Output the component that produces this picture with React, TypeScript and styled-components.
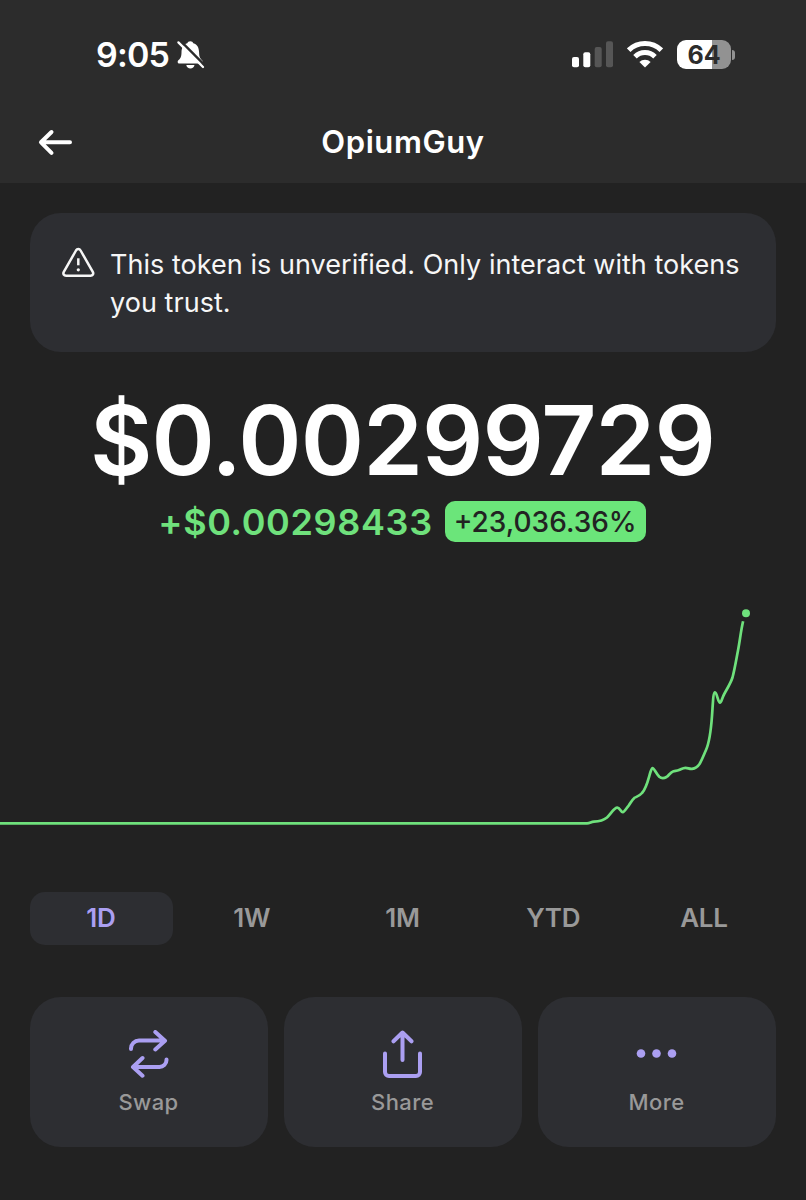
import React from "react";
import styled, { createGlobalStyle } from "styled-components";

const GlobalStyle = createGlobalStyle`
  * { box-sizing: border-box; }
  body {
    margin: 0;
    background: #222222;
    font-family: Inter, "Liberation Sans", sans-serif;
    color: #fff;
  }
`;

const Screen = styled.div`
  width: 806px;
  height: 1200px;
  overflow: hidden;
  display: flex;
  flex-direction: column;
  background: #222222;
`;

const Header = styled.header`
  height: 183px;
  background: #2c2c2c;
  display: flex;
  flex-direction: column;
`;

const StatusBar = styled.div`
  height: 101px;
  padding: 8px 71px 0 96px;
  display: flex;
  align-items: center;
  justify-content: space-between;
`;

const StatusGroup = styled.div<{ $gap: number }>`
  display: flex;
  align-items: center;
  gap: ${(p) => p.$gap}px;
`;

const Time = styled.span`
  font-size: 34px;
  line-height: 40px;
  padding-top: 1px;
  font-weight: 600;
  letter-spacing: -0.8px;
`;

const NavBar = styled.div`
  height: 82px;
  padding: 0 38px;
  display: grid;
  grid-template-columns: 36px 1fr 36px;
  align-items: center;
`;

const Title = styled.h1`
  margin: 0;
  text-align: center;
  font-size: 31px;
  line-height: 40px;
  font-weight: 560;
  letter-spacing: 0.6px;
`;

const Notice = styled.section`
  margin: 30px 30px 0;
  height: 139px;
  padding: 32px 20px 0 32px;
  border-radius: 31px;
  background: #2d2e32;
  display: flex;
  gap: 15px;
`;

const NoticeText = styled.p`
  margin: 0;
  padding-top: 1px;
  white-space: nowrap;
  font-size: 27px;
  line-height: 38px;
  letter-spacing: 0.04px;
  color: #f6f6f6;
`;

const Price = styled.div`
  margin-top: 30px;
  height: 116px;
  padding-right: 1px;
  text-align: center;
  font-size: 96px;
  line-height: 116px;
  font-weight: 570;
  letter-spacing: -0.9px;
  white-space: nowrap;
`;

const ChangeRow = styled.div`
  margin-top: 3px;
  height: 41px;
  padding-right: 2px;
  display: flex;
  justify-content: center;
  align-items: center;
  gap: 12px;
`;

const Change = styled.span`
  color: #6fe17c;
  font-size: 36px;
  line-height: 41px;
  padding-top: 1px;
  font-weight: 570;
  letter-spacing: 0.65px;
`;

const Badge = styled.span`
  width: 201px;
  height: 41px;
  border-radius: 10px;
  background: #6be57a;
  color: #222222;
  text-align: center;
  font-size: 28px;
  line-height: 42px;
  font-weight: 520;
  white-space: nowrap;
`;

const Chart = styled.svg`
  display: block;
  flex: none;
  margin-top: 48px;
`;

const Tabs = styled.nav`
  margin: 52px 30px 0;
  height: 53px;
  display: flex;
  justify-content: space-between;
`;

const Tab = styled.button<{ $active?: boolean }>`
  width: 143px;
  height: 53px;
  padding: 0 1px 1px 0;
  border: 0;
  border-radius: 15px;
  background: ${(p) => (p.$active ? "#2d2e32" : "transparent")};
  color: ${(p) => (p.$active ? "#ab9ff2" : "#999999")};
  font: 560 26px / 52px Inter, sans-serif;
  letter-spacing: -0.2px;
`;

const Actions = styled.div`
  margin: 52px 30px 0;
  display: grid;
  grid-template-columns: repeat(3, 238px);
  justify-content: space-between;
`;

const Action = styled.button`
  height: 150px;
  padding: 33px 1px 0 0;
  border: 0;
  border-radius: 31px;
  background: #2d2e32;
  display: flex;
  flex-direction: column;
  align-items: center;
  color: #999999;
  font: 550 22px / 28px Inter, sans-serif;
  letter-spacing: 0.4px;
`;

const ActionIcon = styled.svg`
  display: block;
  margin-bottom: 10px;
  fill: none;
  stroke: #ab9ff2;
  stroke-width: 4;
  stroke-linecap: round;
  stroke-linejoin: round;
`;

const MutedBell = () => (
  <svg width="29" height="30" viewBox="0 0 29 30">
    <path
      fill="#fff"
      d="M14.3 1.2c1.6 0 2.6.8 3 2 4.2 1.2 5.6 4.5 5.8 9.200.1 4.300.9 5.700 2.900 7.800.7.900.8 1.300.7 2.100-.2.900-.8 1.200-1.700 1.200H3.500c-1.100 0-1.700-.5-1.800-1.300-.1-.9.200-1.400.9-2.100 2-2.100 2.800-3.400 2.900-7.700.1-4.700 1.600-8 5.800-9.200.4-1.200 1.400-2 3-2z"
    />
    <path fill="#fff" d="M10.300 25h8.200c-.3 2.200-2 3.600-4.100 3.600s-3.800-1.400-4.100-3.600z" />
    <path d="M4.200.7 29.500 26" stroke="#2c2c2c" strokeWidth="2.600" />
    <path d="M2.400 2.400 27 27" stroke="#fff" strokeWidth="2.300" strokeLinecap="round" />
  </svg>
);

const Signal = () => (
  <svg width="41" height="27" viewBox="0 0 41 27">
    <rect x="0" y="16" width="7" height="10.300" rx="2" fill="#fff" />
    <rect x="11.300" y="11.300" width="7" height="15" rx="2" fill="#fff" />
    <rect x="22.700" y="6" width="7" height="20.300" rx="2" fill="#565656" />
    <rect x="34" y="0.300" width="7" height="26" rx="2" fill="#565656" />
  </svg>
);

const Wifi = () => (
  <svg width="36" height="27" viewBox="0 0 36 27">
    <g fill="none" stroke="#fff" strokeWidth="5">
      <path d="M1.700 9.200a23.300 23.300 0 0 1 32.600 0" />
      <path d="M8 15.700a14.300 14.300 0 0 1 20 0" />
    </g>
    <path fill="#fff" d="M18 26.500 12.400 21a8 8 0 0 1 11.200 0z" />
  </svg>
);

const Battery = styled.div`
  display: flex;
  align-items: center;
  gap: 1px;
`;

const BatteryBody = styled.div`
  width: 54px;
  height: 29px;
  border-radius: 9px;
  background: linear-gradient(90deg, #fff 64%, #929292 64%);
  color: #2c2c2c;
  font-size: 25px;
  line-height: 30px;
  font-weight: 700;
  text-align: center;
`;

const BatteryCap = styled.div`
  width: 3px;
  height: 10px;
  border-radius: 0 5px 5px 0;
  background: #929292;
`;

const BackArrow = () => (
  <svg width="36" height="28" viewBox="0 0 36 28" fill="none" stroke="#fff" strokeWidth="4" strokeLinecap="round" strokeLinejoin="round">
    <path d="M32 14.300H3M13.500 4 3 14.300l10.500 10.500" />
  </svg>
);

const Warning = () => (
  <svg width="33" height="36" viewBox="0 0 33 36" fill="none" stroke="#f6f6f6" strokeWidth="2.500" strokeLinecap="round" strokeLinejoin="round">
    <path d="M14 5.500 1.800 26.800c-1.100 2 .1 3.900 2.300 3.900h24.400c2.200 0 3.400-1.900 2.300-3.900L18.600 5.500c-1.100-1.900-3.500-1.900-4.600 0z" />
    <path d="M16.300 13.300v7" strokeLinecap="butt" />
    <circle cx="16.300" cy="24.800" r="1.600" fill="#f6f6f6" stroke="none" />
  </svg>
);

const ranges = ["1D", "1W", "1M", "YTD", "ALL"];

export default function App() {
  return (
    <>
      <GlobalStyle />
      <Screen>
        <Header>
          <StatusBar>
            <StatusGroup $gap={7}>
              <Time>9:05</Time>
              <MutedBell />
            </StatusGroup>
            <StatusGroup $gap={14}>
              <Signal />
              <Wifi />
              <Battery>
                <BatteryBody>64</BatteryBody>
                <BatteryCap />
              </Battery>
            </StatusGroup>
          </StatusBar>
          <NavBar>
            <BackArrow />
            <Title>OpiumGuy</Title>
          </NavBar>
        </Header>
        <Notice>
          <Warning />
          <NoticeText>
            This token is unverified. Only interact with tokens
            <br />
            you trust.
          </NoticeText>
        </Notice>
        <Price>$0.00299729</Price>
        <ChangeRow>
          <Change>+$0.00298433</Change>
          <Badge>+23,036.36%</Badge>
        </ChangeRow>
        <Chart width="806" height="250" viewBox="0 590 806 250">
          <path
            fill="none"
            stroke="#6fe17c"
            strokeWidth="2.700"
            strokeLinejoin="round"
            d="M0 823.300H587C590 823.300 591 821.700 594 821.600C600 821.400 603 820.800 607 817.500C610.500 814.500 614 807.700 617.300 807.700C620 807.700 620.500 812.300 622.800 812.200C624.500 812 626.500 808 628.500 805.800C630.500 803.500 632 799.500 634.500 797.800C637 796.600 639.500 796 642 793C646.500 788 648.500 778.500 650 773.500C651 770.500 651.500 768 652.600 768C654 768 656 773.500 659.300 776.800C661.500 778.700 664 778.500 666.500 777C669 775.300 670.500 772.200 673.500 771.200C675.500 770.700 677 771 679 770.100C681 769.300 683 767.800 685.500 767.800C688 767.800 689.500 769.300 692 768.900C695 768.500 697.500 767 699.500 764C702 760 704 754.500 706 750C710 741 711 730 712 716C713 702 713.200 692.400 715 692.400C717 692.400 718 702.700 720 702.700C721.300 702.700 722 698 724.500 693.500C727.500 688 730.500 683.500 732.500 677.500C734.500 670 736 661 738 650.500C740 640 741 630 743.100 621.300"
          />
          <circle cx="746" cy="613.200" r="4" fill="#6fe17c" />
        </Chart>
        <Tabs>
          {ranges.map((r, i) => (
            <Tab key={r} $active={i === 0}>
              {r}
            </Tab>
          ))}
        </Tabs>
        <Actions>
          <Action>
            <ActionIcon width="42" height="48" viewBox="0 0 42 48">
              <path d="M3 19v-.5a8 8 0 0 1 8-8h25M27.300 2 37 10.700 27.300 19.500" />
              <path d="M38.500 29.500v.5a7 7 0 0 1-7 7H6M14.500 28 5 37l9.500 8.700" />
            </ActionIcon>
            Swap
          </Action>
          <Action>
            <ActionIcon width="42" height="48" viewBox="0 0 42 48">
              <path d="M20.500 30V3M11.500 11.300 20.500 2.500l9 8.800M3 23.500V42a4 4 0 0 0 4 4h27a4 4 0 0 0 4-4V23.500" />
            </ActionIcon>
            Share
          </Action>
          <Action>
            <ActionIcon width="42" height="48" viewBox="0 0 42 48">
              <g fill="#ab9ff2" stroke="none">
                <circle cx="5" cy="23.500" r="4.300" />
                <circle cx="20.500" cy="23.500" r="4.300" />
                <circle cx="36" cy="23.500" r="4.300" />
              </g>
            </ActionIcon>
            More
          </Action>
        </Actions>
      </Screen>
    </>
  );
}
